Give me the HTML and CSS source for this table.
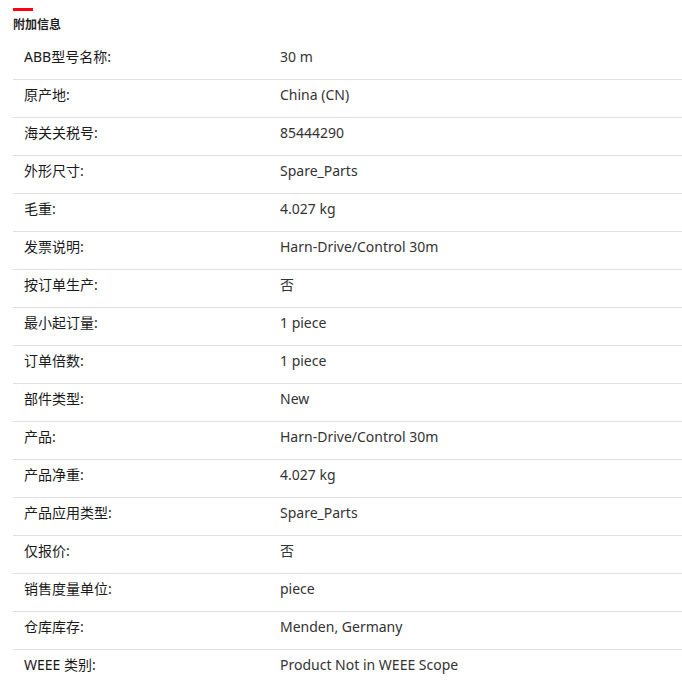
FILE: index.html
```html
<!DOCTYPE html>
<html lang="zh">
<head>
<meta charset="utf-8">
<link rel="stylesheet" href="styles.css">
</head>
<body>
<section class="info">
  <div class="accent"></div>
  <h2 class="title">附加信息</h2>
  <div class="table">
    <div class="row"><div class="label">ABB型号名称:</div><div class="value">30 m</div></div>
    <div class="row"><div class="label">原产地:</div><div class="value">China (CN)</div></div>
    <div class="row"><div class="label">海关关税号:</div><div class="value">85444290</div></div>
    <div class="row"><div class="label">外形尺寸:</div><div class="value">Spare_Parts</div></div>
    <div class="row"><div class="label">毛重:</div><div class="value">4.027 kg</div></div>
    <div class="row"><div class="label">发票说明:</div><div class="value">Harn-Drive/Control 30m</div></div>
    <div class="row"><div class="label">按订单生产:</div><div class="value">否</div></div>
    <div class="row"><div class="label">最小起订量:</div><div class="value">1 piece</div></div>
    <div class="row"><div class="label">订单倍数:</div><div class="value">1 piece</div></div>
    <div class="row"><div class="label">部件类型:</div><div class="value">New</div></div>
    <div class="row"><div class="label">产品:</div><div class="value">Harn-Drive/Control 30m</div></div>
    <div class="row"><div class="label">产品净重:</div><div class="value">4.027 kg</div></div>
    <div class="row"><div class="label">产品应用类型:</div><div class="value">Spare_Parts</div></div>
    <div class="row"><div class="label">仅报价:</div><div class="value">否</div></div>
    <div class="row"><div class="label">销售度量单位:</div><div class="value">piece</div></div>
    <div class="row"><div class="label">仓库库存:</div><div class="value">Menden, Germany</div></div>
    <div class="row"><div class="label">WEEE 类别:</div><div class="value">Product Not in WEEE Scope</div></div>
  </div>
</section>
</body>
</html>
```
FILE: styles.css
```css
html, body {
  margin: 0;
  padding: 0;
  background: #fff;
}
body {
  font-family: "Noto Sans", "Noto Sans CJK SC", sans-serif;
  color: #262626;
}
.info {
  padding: 8px 0 0 13px;
}
.accent {
  width: 20px;
  height: 3px;
  background: #ff000f;
}
.title {
  margin: 6px 0 0;
  font-size: 12px;
  line-height: 16px;
  font-weight: 700;
  color: #1f1f1f;
}
.table {
  margin-top: 9px;
}
.row {
  display: flex;
  height: 38px;
  box-sizing: border-box;
  padding-top: 6px;
  border-bottom: 1px solid #e0e0e0;
  font-size: 14px;
  line-height: 18px;
}
.row:last-child {
  border-bottom: none;
}
.label {
  width: 256px;
  padding-left: 11px;
  font-weight: 400;
  color: #1a1a1a;
}
.value {
  flex: 1;
  color: #333;
}
```
